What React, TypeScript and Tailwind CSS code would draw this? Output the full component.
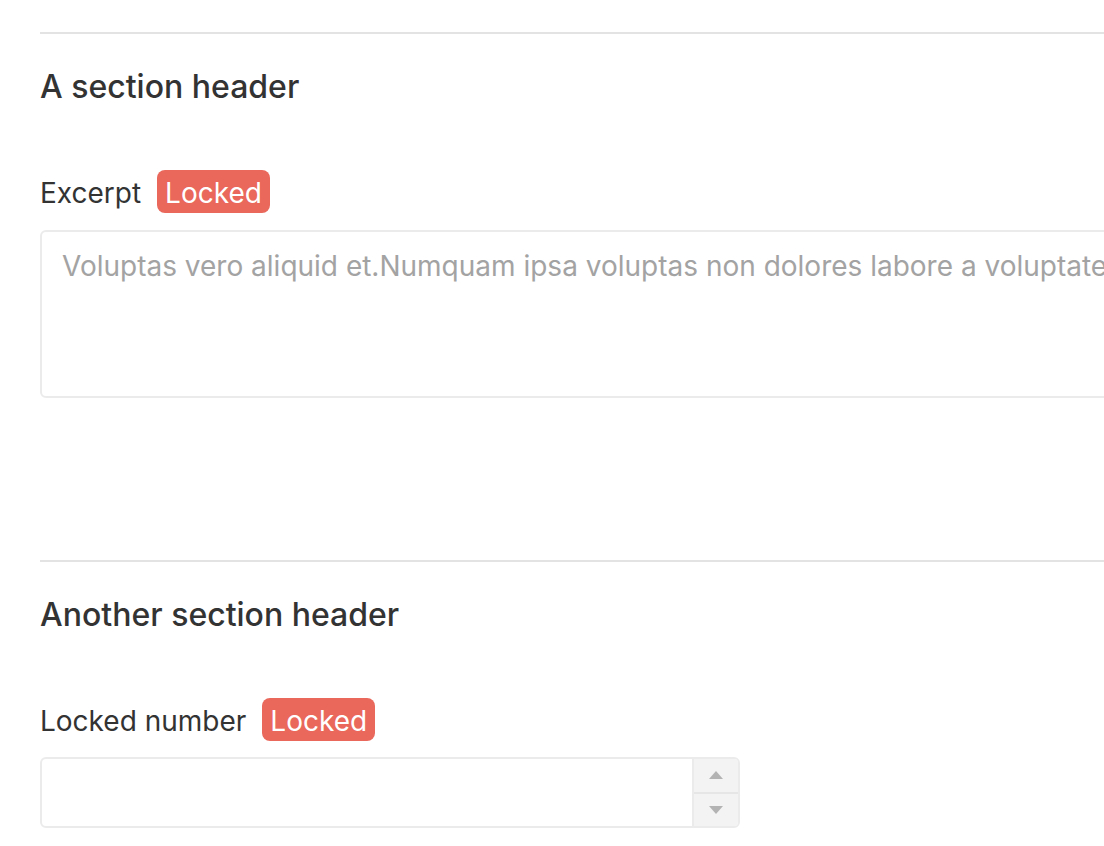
export default function App() {
  return (
    <div
      className="w-full overflow-hidden bg-white text-[#333333]"
      style={{ fontFamily: 'Inter, "Noto Sans", sans-serif' }}
    >
      <div className="w-[1300px] pl-10 pt-8 pb-10">
        {/* Section 1 */}
        <Seccion titulo="A section header">
          <Etiqueta texto="Excerpt" />
          <textarea
            readOnly
            placeholder="Voluptas vero aliquid et.Numquam ipsa voluptas non dolores labore a voluptatem."
            className="mt-[17px] block h-[168px] w-[1220px] resize-none rounded-md border-2 border-[#ebebeb] px-5 pt-[13px] pb-4 text-[28px] leading-[42px] outline-none placeholder:text-[#a3a3a3]"
          />
        </Seccion>

        {/* Section 2 */}
        <div className="mt-[162px]">
          <Seccion titulo="Another section header">
            <Etiqueta texto="Locked number" />
            <div className="mt-4 flex h-[71px] w-[700px] overflow-hidden rounded-md border-2 border-[#ebebeb]">
              <div className="flex-1" />
              <div className="flex w-[46px] flex-col border-l-2 border-[#ebebeb] bg-[#f3f3f3]">
                <div className="flex flex-1 items-center justify-center border-b-2 border-[#e6e6e6]">
                  <svg width="14" height="8" viewBox="0 0 14 8">
                    <path d="M7 0 L14 8 L0 8 Z" fill="#b3b3b3" />
                  </svg>
                </div>
                <div className="flex flex-1 items-center justify-center">
                  <svg width="14" height="8" viewBox="0 0 14 8">
                    <path d="M0 0 L14 0 L7 8 Z" fill="#b3b3b3" />
                  </svg>
                </div>
              </div>
            </div>
          </Seccion>
        </div>
      </div>
    </div>
  )
}

function Seccion({ titulo, children }: { titulo: string; children: React.ReactNode }) {
  return (
    <div>
      <div className="h-[2px] bg-[#e3e3e3]" />
      <h2 className="mt-[29px] text-[32px] font-medium leading-[48px]">{titulo}</h2>
      <div className="mt-[59px]">{children}</div>
    </div>
  )
}

function Etiqueta({ texto }: { texto: string }) {
  return (
    <div className="flex h-[43px] items-start">
      <span className="pt-1 text-[28px] leading-[39px]">{texto}</span>
      <span className="ml-4 rounded-lg bg-[#e9675b] px-2 pt-1 text-[28px] leading-[39px] text-white">
        Locked
      </span>
    </div>
  )
}
